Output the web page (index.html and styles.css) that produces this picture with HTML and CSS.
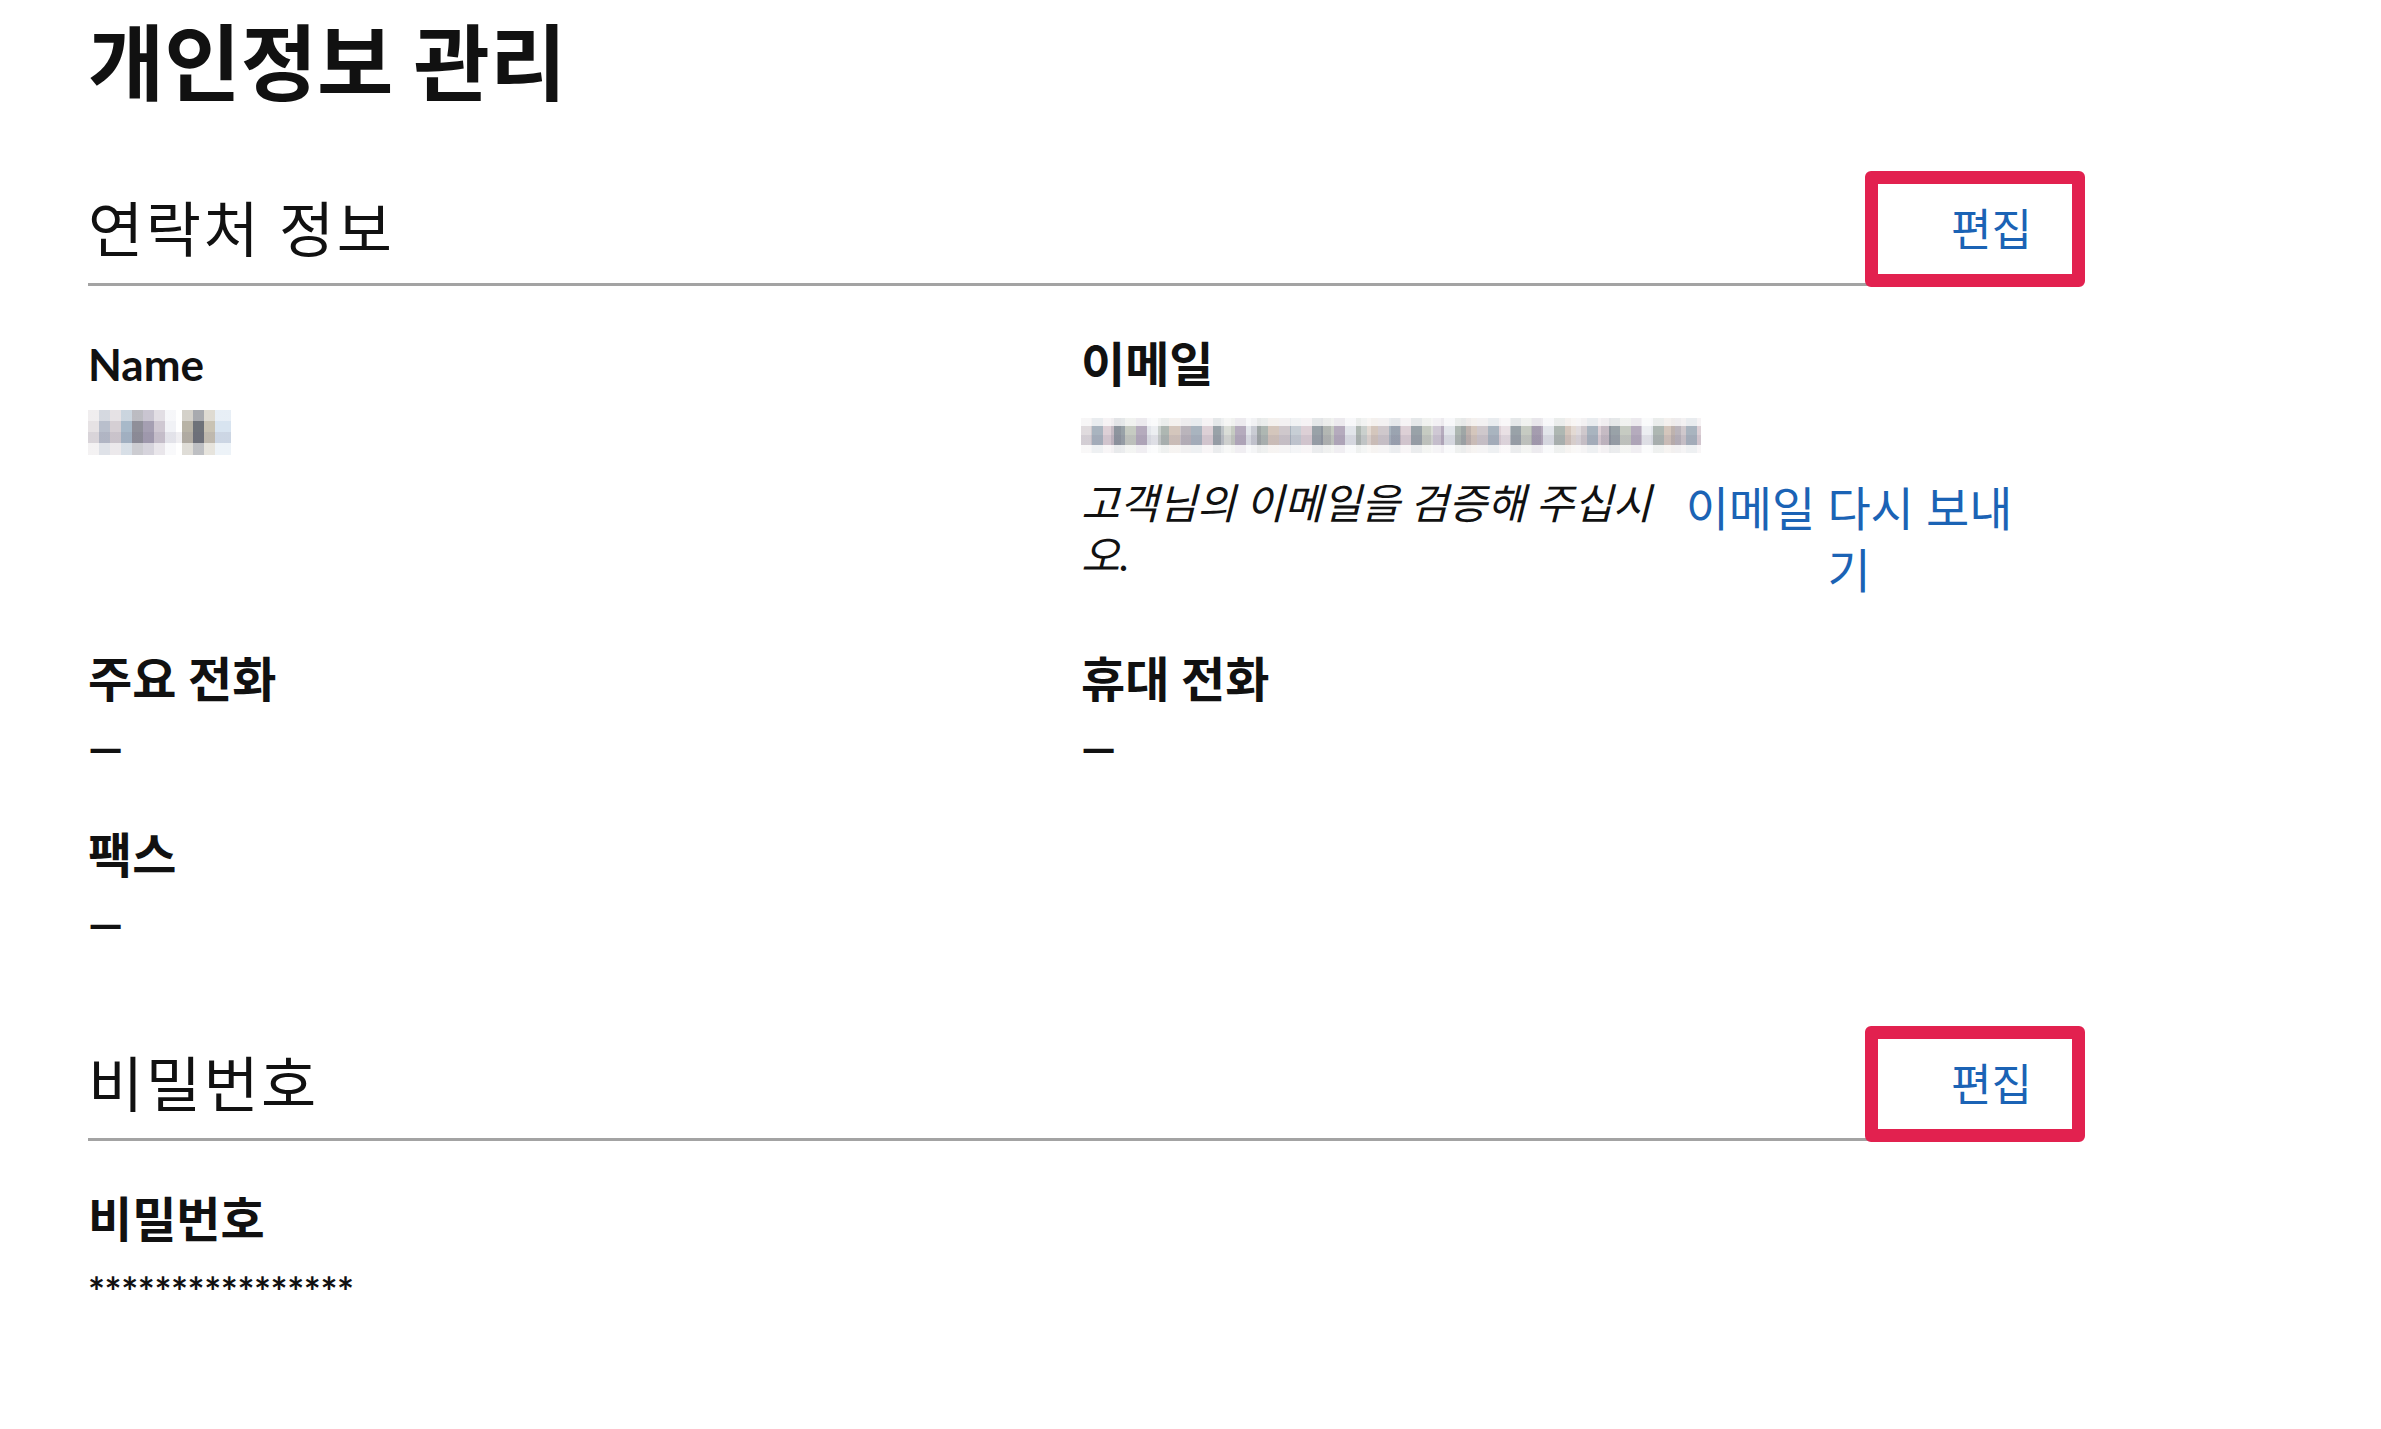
FILE: index.html
```html
<!DOCTYPE html>
<html lang="ko">
<head>
    <meta charset="UTF-8">
    <title>개인정보 관리</title>
    <meta name="viewport" content="width=device-width, initial-scale=1.0">
    <link rel="stylesheet" href="styles.css">
</head>
<body>

<div class="page">
    <h1 class="page-title">개인정보 관리</h1>

    <section class="panel">
        <div class="panel-head">
            <h2>연락처 정보</h2>
            <a class="edit-link" href="#">편집<span class="mark"></span></a>
        </div>

        <div class="fields">
            <div class="field">
                <div class="label label-latin">Name</div>
                <div class="masked masked-name" aria-label="가려진 이름"></div>
            </div>
            <div class="field">
                <div class="label">이메일</div>
                <div class="masked masked-email" aria-label="가려진 이메일"></div>
                <div class="verify">
                    <p class="verify-note">고객님의 이메일을 검증해 주십시오.</p>
                    <a class="verify-link" href="#">이메일 다시 보내기</a>
                </div>
            </div>
            <div class="field">
                <div class="label">주요 전화</div>
                <div class="value dash">—</div>
            </div>
            <div class="field">
                <div class="label">휴대 전화</div>
                <div class="value dash">—</div>
            </div>
            <div class="field">
                <div class="label">팩스</div>
                <div class="value dash">—</div>
            </div>
        </div>
    </section>

    <section class="panel">
        <div class="panel-head">
            <h2>비밀번호</h2>
            <a class="edit-link" href="#">편집<span class="mark"></span></a>
        </div>

        <div class="fields">
            <div class="field">
                <div class="label">비밀번호</div>
                <div class="value password">****************</div>
            </div>
        </div>
    </section>
</div>

</body>
</html>
```

FILE: styles.css
```css
body {
    margin: 0;
    background: #fff;
    color: #111;
    font-family: Lato, "Noto Sans CJK KR", sans-serif;
}
.page {
    width: 1944px;
    padding: 12px 0 60px 88px;
}
.page-title {
    margin: 0;
    font-size: 83px;
    line-height: 100px;
    font-weight: 700;
}

/* sections */
.panel {
    margin-top: 82px;
}
.panel + .panel {
    margin-top: 91px;
}
.panel-head {
    display: flex;
    justify-content: space-between;
    align-items: center;
    padding-bottom: 19px;
    border-bottom: 3px solid #a3a3a3;
}
.panel-head h2 {
    margin: 0;
    font-size: 60px;
    line-height: 70px;
    font-weight: 400;
    letter-spacing: 2.5px;
}
.edit-link {
    position: relative;
    color: #1b63b5;
    font-size: 44px;
    line-height: 60px;
    text-decoration: none;
}
/* red highlight round the edit link */
.mark {
    position: absolute;
    top: -28px;
    bottom: -28px;
    left: -86px;
    right: -53px;
    border: 13px solid #e2214f;
    border-radius: 6px;
    z-index: 2;
}

/* fields */
.fields {
    display: grid;
    grid-template-columns: 1fr 1fr;
    column-gap: 42px;
    row-gap: 43px;
    margin-top: 48px;
}
.label {
    font-size: 48px;
    line-height: 60px;
    font-weight: 700;
}
.label-latin {
    font-size: 44px;
}
.value {
    margin-top: 13px;
    font-size: 40px;
    line-height: 60px;
    font-weight: 700;
}
.dash {
    margin-top: 8px;
    margin-bottom: 5px;
    font-size: 44px;
    font-weight: 900;
}
.password {
    letter-spacing: -0.4px;
}

/* pixelated values */
.masked {
    background:
        linear-gradient(180deg, rgba(255,255,255,.75) 0 8px, transparent 8px 27px, rgba(255,255,255,.8) 27px 35px),
        repeating-linear-gradient(180deg, transparent 0 17px, rgba(120,110,140,.12) 17px 27px),
        repeating-linear-gradient(90deg, rgba(255,255,255,.35) 0 10px, transparent 10px 30px, rgba(90,90,110,.18) 30px 40px, transparent 40px 70px),
        repeating-linear-gradient(90deg, #cfc8cc 0 11px, #a9b4bf 11px 22px, #ddd0d6 22px 33px, #99a2a8 33px 44px, #c6cbc2 44px 55px, #b5abbd 55px 66px, #e2e5ea 66px 77px, #aeb7b2 77px 88px, #d4c6bc 88px 99px);
}
.masked-name {
    width: 143px;
    height: 45px;
    margin-top: 16px;
    background:
        repeating-linear-gradient(180deg, rgba(255,255,255,.4) 0 11px, transparent 11px 22px, rgba(100,90,120,.1) 22px 33px, rgba(255,255,255,.55) 33px 45px),
        linear-gradient(90deg, #e6e2e4 0 11px, #b9bfcc 11px 22px, #d5cfd4 22px 33px, #a8b9c9 33px 44px, #8f8f99 44px 55px, #a59fb2 55px 66px, #cfc8d2 66px 77px, #f1f2f6 77px 88px, #fff 88px 94px, #b8b3a6 94px 105px, #6e7279 105px 116px, #c9c3b4 116px 127px, #d8e4f0 127px 143px);
}
.masked-email {
    width: 620px;
    height: 35px;
    margin-top: 24px;
}

/* email verification */
.verify {
    display: flex;
    align-items: flex-start;
    margin-top: 24px;
    margin-bottom: 5px;
}
.verify-note {
    width: 585px;
    margin: 0;
    font-size: 42px;
    line-height: 52px;
    font-style: italic;
}
.verify-link {
    flex: 1;
    color: #1b63b5;
    font-size: 47px;
    line-height: 62px;
    text-align: center;
    text-decoration: none;
}
```
